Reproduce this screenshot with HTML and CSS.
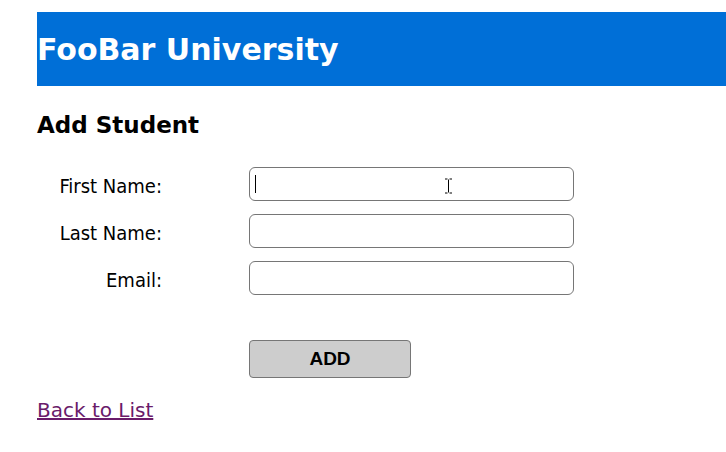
FILE: index.html
```html
<!DOCTYPE html>
<html>
<head>
<meta charset="utf-8">
<link rel="stylesheet" href="styles.css">
</head>
<body>
<header class="banner"><h1 class="brand">FooBar University</h1></header>
<main class="content">
  <h2 class="title">Add Student</h2>
  <form class="form">
    <label class="lbl" for="fn">First Name:</label>
    <div class="field focus"><span class="caret"></span><input id="fn" class="inp" type="text"><svg class="ibeam" width="9" height="16" viewBox="0 0 9 16"><path d="M1 1h2.5M5.5 1H8M4.5 1.5v13M1 15h2.5M5.5 15H8" stroke="#000" stroke-width="1" fill="none"/></svg></div>
    <label class="lbl" for="ln">Last Name:</label>
    <div class="field"><input id="ln" class="inp" type="text"></div>
    <label class="lbl" for="em">Email:</label>
    <div class="field"><input id="em" class="inp" type="text"></div>
    <div class="btnrow"><button type="button" class="btn">ADD</button></div>
  </form>
  <a class="back" href="#">Back to List</a>
</main>
</body>
</html>
```
FILE: styles.css
```css
html, body { margin: 0; padding: 0; background: #fff; }
body { padding: 12px 0 0 37px; font-family: "DejaVu Sans", Verdana, sans-serif; }
.banner { background: #006fd7; height: 74px; display: flex; align-items: center; }
.brand { margin: 0; color: #fff; font-size: 30px; font-weight: bold; line-height: 1; padding-top: 2px; }
.content { display: flex; flex-direction: column; align-items: flex-start; }
.title { margin: 26px 0 0 0; font-size: 23px; font-weight: bold; line-height: 27px; color: #000; }
.form { display: grid; grid-template-columns: 125px 325px; column-gap: 87px; row-gap: 13px; margin-top: 28px; align-items: center; }
.lbl { font-family: "DejaVu Sans Condensed", Tahoma, sans-serif; font-size: 20px; color: #000; text-align: right; padding-top: 3px; }
.field { position: relative; height: 34px; }
.inp { box-sizing: border-box; width: 325px; height: 34px; margin: 0; border: 1px solid #767676; border-radius: 6px; background: #fff; padding: 0 6px; font-size: 16px; outline: none; }
.caret { position: absolute; left: 6px; top: 8px; width: 1px; height: 18px; background: #000; }
.ibeam { position: absolute; left: 195px; top: 11px; }
.btnrow { grid-column: 2; margin-top: 32px; }
.btn { box-sizing: border-box; width: 162px; height: 38px; background: #cdcdcd; border: 1px solid #767676; border-radius: 4px; font-family: "Liberation Sans", Arial, sans-serif; font-weight: bold; font-size: 19px; color: #000; padding: 0; }
.back { margin-top: 20px; color: #6a1b6a; font-size: 20px; text-decoration: underline; }
```
